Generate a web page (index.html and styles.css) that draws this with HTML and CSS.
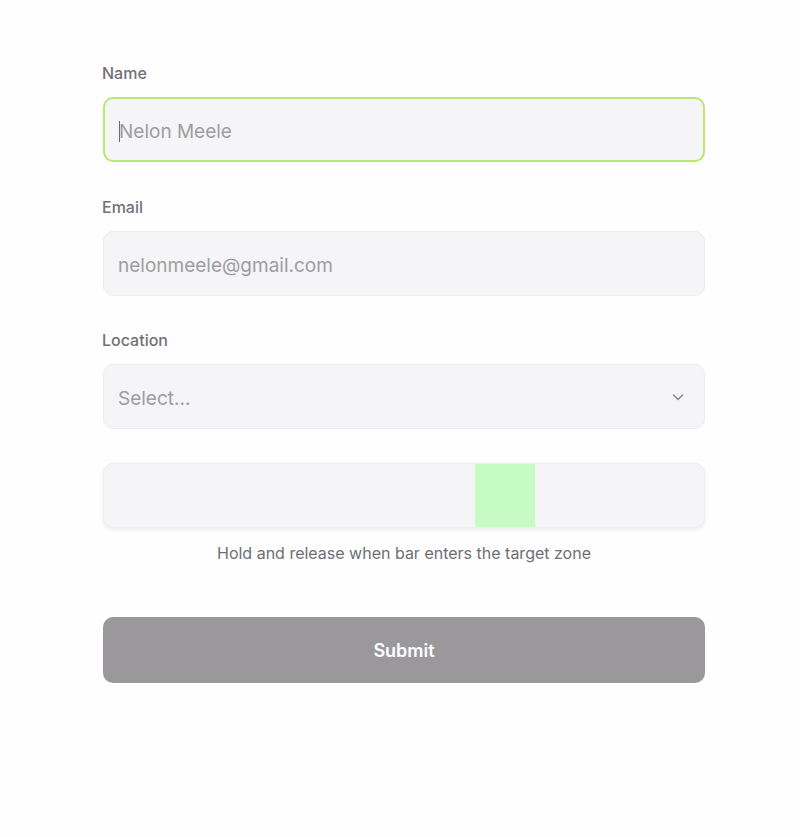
FILE: index.html
```html
<!DOCTYPE html>
<html lang="en">
<head>
<meta charset="utf-8">
<title>Form</title>
<link rel="stylesheet" href="styles.css">
</head>
<body>
<form class="form">
  <div class="field">
    <label class="label">Name</label>
    <div class="control control--focus"><span class="caret"></span><span class="placeholder">Nelon Meele</span></div>
  </div>
  <div class="field">
    <label class="label">Email</label>
    <div class="control"><span class="placeholder">nelonmeele@gmail.com</span></div>
  </div>
  <div class="field">
    <label class="label">Location</label>
    <div class="control control--select">
      <span class="placeholder">Select...</span>
      <svg class="chevron" width="14" height="14" viewBox="0 0 14 14" fill="none"><path d="M2.5 5 L7 9.5 L11.5 5" stroke="#8b8a8f" stroke-width="1.6" stroke-linecap="round" stroke-linejoin="round"/></svg>
    </div>
  </div>
  <div class="timing">
    <div class="track"><div class="zone" style="left:61.8%;width:10.1%"></div></div>
    <p class="hint">Hold and release when bar enters the target zone</p>
  </div>
  <button type="button" class="submit">Submit</button>
</form>
</body>
</html>
```
FILE: styles.css
```css
* { box-sizing: border-box; }
html, body { margin: 0; padding: 0; background: #fefefe; }
body { font-family: Inter, "Noto Sans", "Liberation Sans", sans-serif; }
.form {
  width: 602px;
  margin: 0 0 0 103px;
  padding-top: 63px;
  display: flex;
  flex-direction: column;
}
.field {
  display: flex;
  flex-direction: column;
  margin-bottom: 34px;
}
.field:first-child { margin-bottom: 35px; }
.label {
  font-size: 16px;
  line-height: 20px;
  font-weight: 500;
  color: #727176;
  margin-bottom: 14px;
  margin-left: -1px;
}
.control {
  height: 65px;
  background: #f5f4f6;
  border: 1px solid #ededef;
  border-radius: 10px;
  display: flex;
  align-items: center;
  padding: 3px 14px 0;
  position: relative;
}
.control--focus {
  border: 2px solid #b6e872;
  padding-left: 14px;
}
.control--select { justify-content: space-between; padding-right: 19px; }
.control--select .chevron { margin-top: -2px; }
.placeholder {
  font-size: 19px;
  color: #9e9da2;
}
.caret {
  position: absolute;
  left: 14px;
  top: 22px;
  width: 1px;
  height: 21px;
  background: #6a6a6e;
}
.timing {
  margin-top: 0;
  display: flex;
  flex-direction: column;
  align-items: center;
}
.track {
  width: 100%;
  height: 65px;
  background: #f5f4f6;
  border: 1px solid #ededef;
  border-radius: 10px;
  box-shadow: 0 2px 4px rgba(0,0,0,0.07);
  position: relative;
  overflow: hidden;
}
.zone {
  position: absolute;
  top: 0;
  bottom: 0;
  background: #c6fcc4;
}
.hint {
  margin: 15px 0 0;
  font-size: 16px;
  line-height: 20px;
  color: #6f6e73;
}
.submit {
  margin-top: 54px;
  height: 66px;
  width: 100%;
  border: none;
  border-radius: 10px;
  background: #9a989b;
  color: #ffffff;
  font-family: Inter, "Noto Sans", "Liberation Sans", sans-serif;
  font-size: 18px;
  font-weight: 600;
}
```
